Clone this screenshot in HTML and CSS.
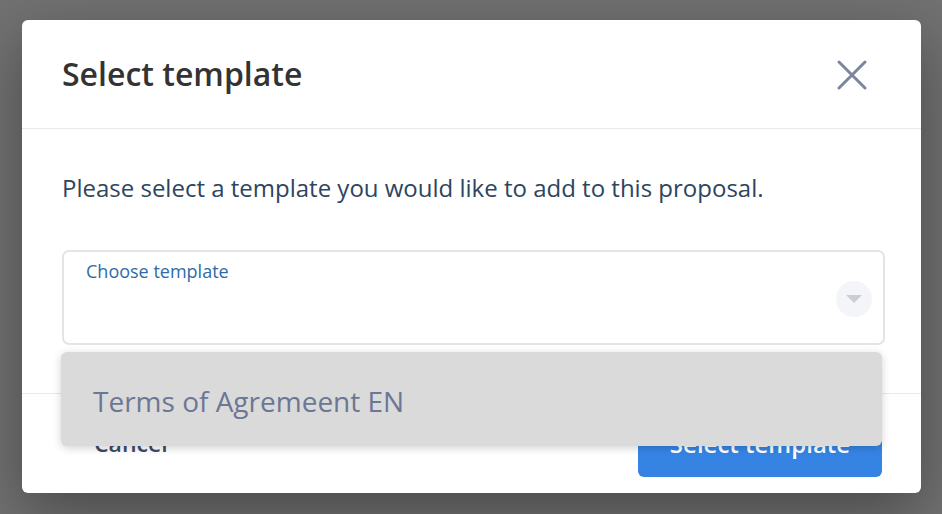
FILE: index.html
```html
<!DOCTYPE html>
<html>
<head>
<meta charset="utf-8">
<link rel="stylesheet" href="styles.css">
</head>
<body>
<div class="modal">
  <div class="modal-header">
    <h2 class="title">Select template</h2>
    <button class="close" aria-label="Close">
      <svg width="30" height="30" viewBox="0 0 30 30"><path d="M2 2 L28 28 M28 2 L2 28" stroke="#7b859f" stroke-width="3" stroke-linecap="round" fill="none"/></svg>
    </button>
  </div>
  <div class="modal-body">
    <p class="intro">Please select a template you would like to add to this proposal.</p>
    <div class="select-wrap">
      <div class="select">
        <span class="select-label">Choose template</span>
        <span class="select-toggle"><svg width="16" height="8" viewBox="0 0 16 8"><path d="M0 0 H16 L8 8 Z" fill="#cbccd6"/></svg></span>
      </div>
      <div class="menu">
        <div class="menu-item">Terms of Agremeent EN</div>
      </div>
    </div>
  </div>
  <div class="modal-footer">
    <button class="btn btn-cancel">Cancel</button>
    <button class="btn btn-primary">Select template</button>
  </div>
</div>
</body>
</html>
```
FILE: styles.css
```css
* { box-sizing: border-box; }
html, body { margin: 0; height: 100%; }
body {
  background: #717171;
  font-family: "Open Sans", "Noto Sans", sans-serif;
  padding: 20px 21px 0 22px;
}
.modal {
  width: 899px;
  height: 473px;
  background: #fff;
  border-radius: 6px;
  box-shadow: 0 20px 60px rgba(0,0,0,0.35);
  display: flex;
  flex-direction: column;
  overflow: visible;
}
.modal-header {
  height: 109px;
  border-bottom: 1px solid #e9e9ec;
  display: flex;
  align-items: center;
  justify-content: space-between;
  padding: 0 54px 0 40px;
}
.title {
  margin: 0;
  font-size: 32px;
  font-weight: 600;
  color: #333333;
  line-height: 44px;
  padding-bottom: 0;
}
.close {
  border: 0;
  background: none;
  padding: 0;
  width: 30px;
  height: 30px;
  display: flex;
  margin-top: 2px;
}
.modal-body {
  padding: 42px 36px 48px 40px;
  border-bottom: 1px solid #e9e9ec;
}
.intro {
  margin: 0 0 46px;
  font-size: 24px;
  line-height: 33px;
  color: #2d4560;
}
.select-wrap { position: relative; }
.select {
  height: 95px;
  border: 2px solid #e1e5ea;
  border-radius: 7px;
  display: flex;
  align-items: center;
  justify-content: space-between;
  padding: 0 11px 0 22px;
  position: relative;
}
.select-label {
  position: absolute;
  left: 22px;
  top: 7px;
  font-size: 18px;
  line-height: 24px;
  color: #2e6ba8;
}
.select-toggle {
  margin-left: auto;
  margin-top: 2px;
  width: 36px;
  height: 36px;
  border-radius: 50%;
  background: #f4f5f9;
  display: flex;
  align-items: center;
  justify-content: center;
}
.menu {
  position: absolute;
  left: -1px;
  top: 102px;
  width: 821px;
  height: 94px;
  background: #dadada;
  border-radius: 6px;
  box-shadow: 0 2px 8px rgba(0,0,0,0.18);
  display: flex;
  align-items: center;
  padding: 0 32px;
  z-index: 2;
}
.menu-item {
  font-size: 28px;
  color: #6b7794;
  line-height: 38px;
  padding-top: 4px;
}
.modal-footer {
  flex: 1;
  display: flex;
  justify-content: space-between;
  align-items: flex-start;
  padding: 35px 39px 0 40px;
}
.btn {
  border: 0;
  font-family: "Open Sans", "Noto Sans", sans-serif;
  font-weight: 600;
  line-height: 29px;
  height: 48px;
  padding: 0 32px 19px;
  border-radius: 6px;
  white-space: nowrap;
}
.btn-cancel {
  font-size: 23px;
  background: none;
  color: #3e4b69;
}
.btn-primary {
  font-size: 24px;
  width: 244px;
  padding: 0 0 19px;
  text-align: center;
  background: #3584e4;
  color: #fff;
}
```
